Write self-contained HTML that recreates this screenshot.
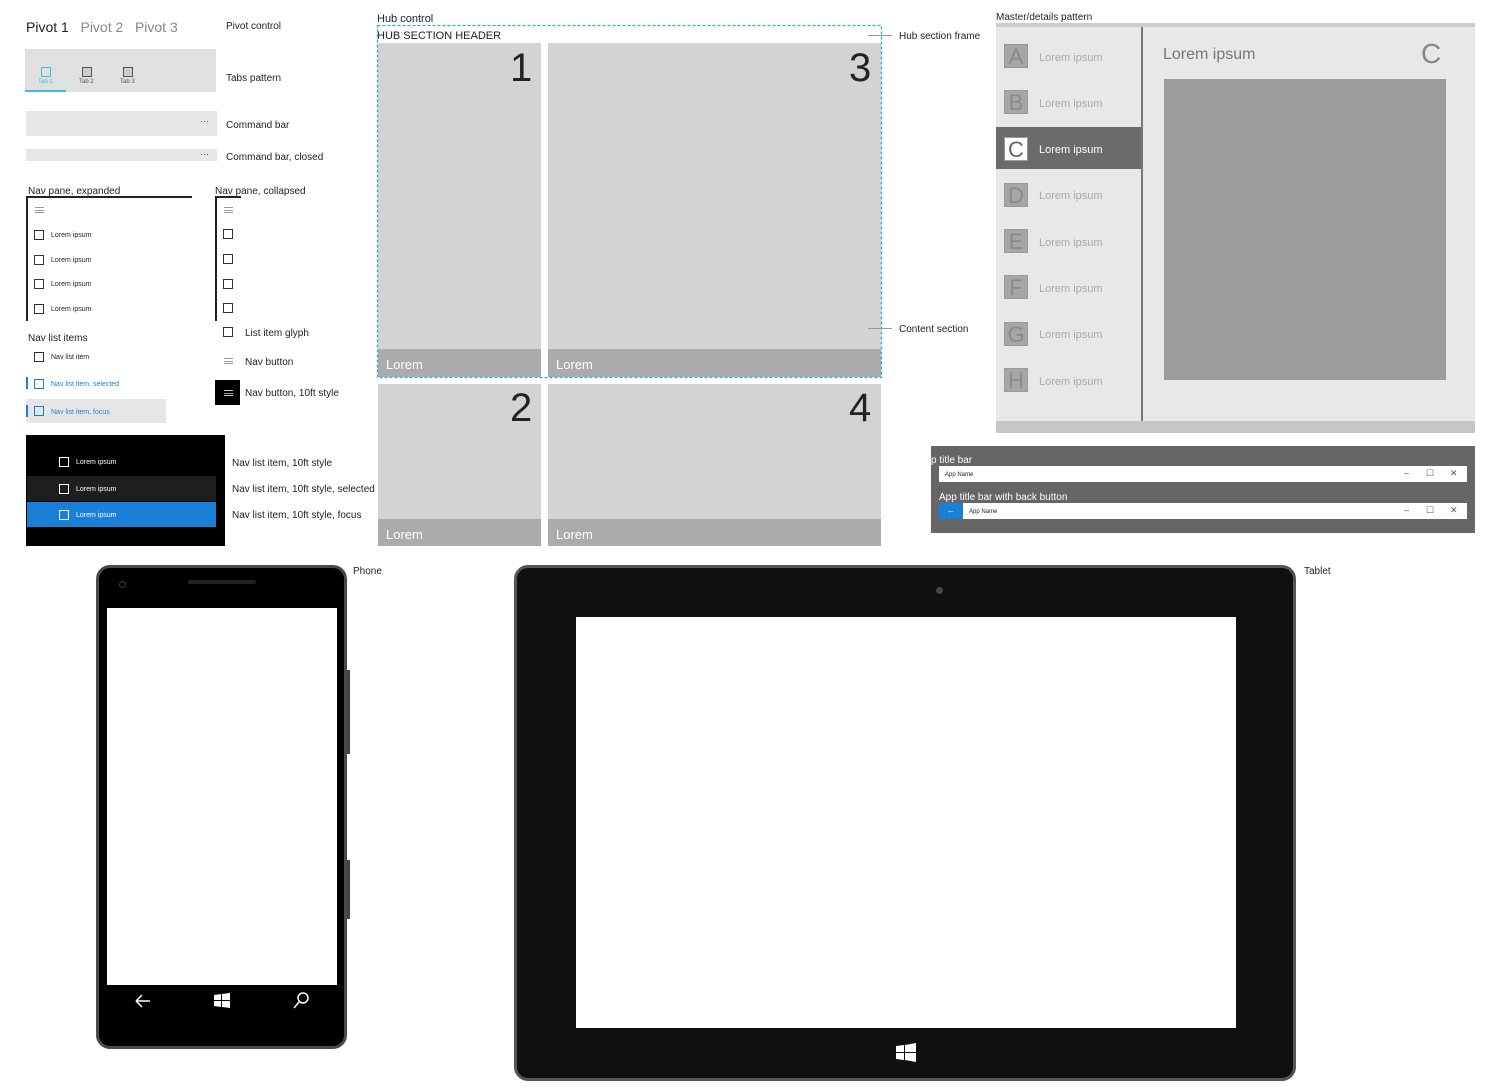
<!DOCTYPE html>
<html><head><meta charset="utf-8"><style>
*{margin:0;padding:0;box-sizing:border-box}
body{width:1500px;height:1091px;background:#fff;position:relative;overflow:hidden;font-family:"Liberation Sans",sans-serif;color:#222}
.a{position:absolute}
.l{position:absolute;font-size:10px;white-space:nowrap;color:#222}
.cb{position:absolute;width:10px;height:10px;border:1.6px solid #333}
.s{font-size:7px}
.ham{position:absolute;width:9px;height:6px;border-top:1px solid #999;border-bottom:1px solid #999}
.ham:after{content:"";position:absolute;left:0;right:0;top:1.5px;border-top:1px solid #999}
.mi{position:absolute;left:1004px;width:24px;height:24px;background:#a6a6a6;border:1px solid #999;color:#8a8a8a;font-size:22px;line-height:24px;text-align:center}
.mt{position:absolute;left:1039px;font-size:11px;color:#aaa}
.tc{position:absolute;font-size:9px;color:#555}
</style></head><body>
<!-- Pivot -->
<div class="l" style="left:26px;top:19px;font-size:14px;color:#222">Pivot 1 <span style="color:#888">&nbsp;&nbsp;Pivot 2 &nbsp;&nbsp;Pivot 3</span></div>
<div class="l" style="left:226px;top:21px">Pivot control</div>
<div class="a" style="left:25px;top:49px;width:191px;height:43px;background:#e0e0e0"></div>
<div class="a" style="left:25px;top:90px;width:41px;height:2px;background:#3cc0d6"></div>
<div class="a" style="left:41px;top:67px;width:10px;height:10px;border:1.5px solid #3cc0d6"></div>
<div class="a" style="left:82px;top:67px;width:10px;height:10px;border:1.5px solid #555;background:#ccc"></div>
<div class="a" style="left:123px;top:67px;width:10px;height:10px;border:1.5px solid #555;background:#ccc"></div>
<div class="l" style="left:38px;top:79px;font-size:6px;color:#3cc0d6">Tab 1</div>
<div class="l" style="left:79px;top:79px;font-size:6px;color:#555">Tab 2</div>
<div class="l" style="left:120px;top:79px;font-size:6px;color:#555">Tab 3</div>
<div class="l" style="left:226px;top:73px">Tabs pattern</div>
<div class="a" style="left:26px;top:111px;width:191px;height:25px;background:#e6e6e6"></div>
<div class="l" style="left:200px;top:116px;font-size:9px;color:#555">···</div>
<div class="l" style="left:226px;top:120px">Command bar</div>
<div class="a" style="left:26px;top:149px;width:191px;height:12px;background:#e6e6e6"></div>
<div class="l" style="left:200px;top:149px;font-size:9px;color:#555">···</div>
<div class="l" style="left:226px;top:152px">Command bar, closed</div>
<!-- Nav pane -->
<div class="l" style="left:28px;top:186px">Nav pane, expanded</div>
<div class="a" style="left:26px;top:196px;width:166px;height:2px;background:#222"></div>
<div class="a" style="left:26px;top:196px;width:2px;height:125px;background:#222"></div>
<div class="ham" style="left:35px;top:207px"></div>
<div class="cb" style="left:34px;top:230px"></div><div class="l s" style="left:51px;top:232px">Lorem ipsum</div>
<div class="cb" style="left:34px;top:255px"></div><div class="l s" style="left:51px;top:257px">Lorem ipsum</div>
<div class="cb" style="left:34px;top:279px"></div><div class="l s" style="left:51px;top:281px">Lorem ipsum</div>
<div class="cb" style="left:34px;top:304px"></div><div class="l s" style="left:51px;top:306px">Lorem ipsum</div>
<div class="l" style="left:215px;top:186px">Nav pane, collapsed</div>
<div class="a" style="left:215px;top:196px;width:26px;height:2px;background:#222"></div>
<div class="a" style="left:215px;top:196px;width:2px;height:125px;background:#222"></div>
<div class="ham" style="left:224px;top:207px"></div>
<div class="cb" style="left:223px;top:229px"></div>
<div class="cb" style="left:223px;top:254px"></div>
<div class="cb" style="left:223px;top:279px"></div>
<div class="cb" style="left:223px;top:303px"></div>
<div class="cb" style="left:223px;top:327px"></div><div class="l" style="left:245px;top:328px">List item glyph</div>
<div class="ham" style="left:224px;top:358px"></div><div class="l" style="left:245px;top:357px">Nav button</div>
<div class="a" style="left:215px;top:380px;width:25px;height:25px;background:#000"></div>
<div class="ham" style="left:224px;top:390px;border-color:#ccc"></div>
<div class="l" style="left:245px;top:388px">Nav button, 10ft style</div>
<div class="l" style="left:28px;top:333px">Nav list items</div>
<div class="cb" style="left:34px;top:352px"></div><div class="l s" style="left:51px;top:354px">Nav list item</div>
<div class="a" style="left:26px;top:377px;width:2px;height:12px;background:#1a7fd6"></div>
<div class="cb" style="left:34px;top:379px;border-color:#1a7fd6"></div><div class="l s" style="left:51px;top:381px;color:#1a7fd6">Nav list item, selected</div>
<div class="a" style="left:26px;top:399px;width:140px;height:24px;background:#e6e6e6"></div>
<div class="a" style="left:26px;top:405px;width:2px;height:12px;background:#1a7fd6"></div>
<div class="cb" style="left:34px;top:406px;border-color:#1a7fd6"></div><div class="l s" style="left:51px;top:409px;color:#1a7fd6">Nav list item, focus</div>
<div class="a" style="left:26px;top:435px;width:199px;height:111px;background:#000"></div>
<div class="a" style="left:27px;top:476px;width:189px;height:25px;background:#1e1e1e"></div>
<div class="a" style="left:27px;top:502px;width:189px;height:25px;background:#1a7fd6"></div>
<div class="cb" style="left:59px;top:457px;border-color:#fff"></div><div class="l s" style="left:76px;top:459px;color:#fff">Lorem ipsum</div>
<div class="cb" style="left:59px;top:484px;border-color:#fff"></div><div class="l s" style="left:76px;top:486px;color:#fff">Lorem ipsum</div>
<div class="cb" style="left:59px;top:510px;border-color:#fff"></div><div class="l s" style="left:76px;top:512px;color:#fff">Lorem ipsum</div>
<div class="l" style="left:232px;top:458px">Nav list item, 10ft style</div>
<div class="l" style="left:232px;top:484px">Nav list item, 10ft style, selected</div>
<div class="l" style="left:232px;top:510px">Nav list item, 10ft style, focus</div>
<!-- Hub -->
<div class="l" style="left:377px;top:13px;font-size:11px">Hub control</div>
<div class="l" style="left:377px;top:30px;font-size:11px">HUB SECTION HEADER</div>
<div class="a" style="left:378px;top:43px;width:163px;height:334px;background:#d3d3d3"></div>
<div class="a" style="left:548px;top:43px;width:333px;height:334px;background:#d3d3d3"></div>
<div class="a" style="left:378px;top:349px;width:163px;height:28px;background:#ababab"></div>
<div class="a" style="left:548px;top:349px;width:333px;height:28px;background:#ababab"></div>
<svg class="a" style="left:376px;top:24px" width="508" height="356"><rect x="1.5" y="1.5" width="504" height="352" fill="none" stroke="#29aae1" stroke-width="1.3" stroke-dasharray="3 2"/></svg>
<div class="l" style="left:510px;top:46px;font-size:40px;color:#222">1</div>
<div class="l" style="left:849px;top:46px;font-size:40px;color:#222">3</div>
<div class="l" style="left:386px;top:357px;font-size:13px;color:#fff">Lorem</div>
<div class="l" style="left:556px;top:357px;font-size:13px;color:#fff">Lorem</div>
<div class="a" style="left:378px;top:384px;width:163px;height:162px;background:#d3d3d3"></div>
<div class="a" style="left:548px;top:384px;width:333px;height:162px;background:#d3d3d3"></div>
<div class="a" style="left:378px;top:519px;width:163px;height:27px;background:#ababab"></div>
<div class="a" style="left:548px;top:519px;width:333px;height:27px;background:#ababab"></div>
<div class="l" style="left:510px;top:386px;font-size:40px;color:#222">2</div>
<div class="l" style="left:849px;top:386px;font-size:40px;color:#222">4</div>
<div class="l" style="left:386px;top:527px;font-size:13px;color:#fff">Lorem</div>
<div class="l" style="left:556px;top:527px;font-size:13px;color:#fff">Lorem</div>
<div class="a" style="left:868px;top:35px;width:24px;height:1px;background:#999"></div>
<div class="l" style="left:899px;top:31px">Hub section frame</div>
<div class="a" style="left:868px;top:328px;width:24px;height:1px;background:#999"></div>
<div class="l" style="left:899px;top:324px">Content section</div>
<!-- Master details -->
<div class="l" style="left:996px;top:12px">Master/details pattern</div>
<div class="a" style="left:996px;top:23px;width:479px;height:410px;background:#e8e8e8;border-top:4px solid #ccc"></div>
<div class="a" style="left:996px;top:421px;width:479px;height:12px;background:#c6c6c6"></div>
<div class="a" style="left:1141px;top:27px;width:2px;height:394px;background:#777"></div>
<div class="a" style="left:996px;top:127px;width:145px;height:42px;background:#6b6b6b"></div>
<div class="mi" style="top:44px">A</div><div class="mt" style="top:52px">Lorem ipsum</div>
<div class="mi" style="top:90px">B</div><div class="mt" style="top:98px">Lorem ipsum</div>
<div class="mi" style="top:137px;background:#fff;color:#666">C</div><div class="mt" style="top:144px;color:#fff">Lorem ipsum</div>
<div class="mi" style="top:183px">D</div><div class="mt" style="top:190px">Lorem ipsum</div>
<div class="mi" style="top:229px">E</div><div class="mt" style="top:237px">Lorem ipsum</div>
<div class="mi" style="top:275px">F</div><div class="mt" style="top:283px">Lorem ipsum</div>
<div class="mi" style="top:322px">G</div><div class="mt" style="top:329px">Lorem ipsum</div>
<div class="mi" style="top:368px">H</div><div class="mt" style="top:376px">Lorem ipsum</div>
<div class="l" style="left:1163px;top:46px;font-size:16px;color:#777">Lorem ipsum</div>
<div class="l" style="left:1421px;top:38px;font-size:28px;color:#888">C</div>
<div class="a" style="left:1164px;top:79px;width:282px;height:301px;background:#9c9c9c"></div>
<!-- title bars -->
<div class="a" style="left:931px;top:446px;width:544px;height:87px;background:#666"></div>
<div class="l" style="left:931px;top:455px;color:#fff">p title bar</div>
<div class="a" style="left:939px;top:466px;width:528px;height:16px;background:#fff"></div>
<div class="l" style="left:945px;top:472px;font-size:6px">App Name</div>
<div class="l" style="left:939px;top:492px;color:#fff">App title bar with back button</div>
<div class="a" style="left:939px;top:503px;width:528px;height:16px;background:#fff"></div>
<div class="a" style="left:939px;top:503px;width:24px;height:16px;background:#1a7fd6;color:#fff;font-size:8px;text-align:center;line-height:16px">←</div>
<div class="l" style="left:969px;top:509px;font-size:6px">App Name</div>
<div class="tc" style="left:1404px;top:468px">–</div><div class="tc" style="left:1426px;top:468px">☐</div><div class="tc" style="left:1450px;top:468px">✕</div>
<div class="tc" style="left:1404px;top:505px">–</div><div class="tc" style="left:1426px;top:505px">☐</div><div class="tc" style="left:1450px;top:505px">✕</div>
<!-- Phone -->
<div class="a" style="left:346px;top:670px;width:4px;height:84px;background:#444"></div>
<div class="a" style="left:346px;top:860px;width:4px;height:59px;background:#444"></div>
<div class="a" style="left:96px;top:565px;width:251px;height:484px;background:#000;border:3px solid #4a4a4a;border-radius:14px"></div>
<div class="a" style="left:119px;top:581px;width:7px;height:7px;border:1.5px solid #1d4a4a;border-radius:50%"></div>
<div class="a" style="left:188px;top:580px;width:68px;height:4px;background:#222;border-radius:3px"></div>
<div class="a" style="left:107px;top:608px;width:230px;height:377px;background:#fff"></div>
<svg class="a" style="left:130px;top:990px" width="190" height="22" viewBox="0 0 190 22"><path d="M6 11h14M6 11l6-6M6 11l6 6" stroke="#fff" stroke-width="1.5" fill="none"/><path d="M84 5l7-1v6h-7zM92 4l8-1v7h-8zM84 11h7v6l-7-1zM92 11h8v7l-8-1z" fill="#fff"/><circle cx="173" cy="8" r="5" stroke="#fff" stroke-width="1.5" fill="none"/><path d="M169 12l-5 6" stroke="#fff" stroke-width="1.5"/></svg>
<div class="l" style="left:353px;top:566px">Phone</div>
<!-- Tablet -->
<div class="a" style="left:514px;top:565px;width:782px;height:516px;background:#0f1012;border:3px solid #555;border-radius:14px"></div>
<div class="a" style="left:936px;top:587px;width:7px;height:7px;background:#444;border-radius:50%"></div>
<div class="a" style="left:576px;top:617px;width:660px;height:411px;background:#fff"></div>
<svg class="a" style="left:896px;top:1043px" width="20" height="19" viewBox="0 0 20 19"><path d="M0 3l8-1v7H0zM9 2l11-2v9H9zM0 10h8v7l-8-1zM9 10h11v9l-11-2z" fill="#fff"/></svg>
<div class="l" style="left:1304px;top:566px">Tablet</div>
</body></html>
